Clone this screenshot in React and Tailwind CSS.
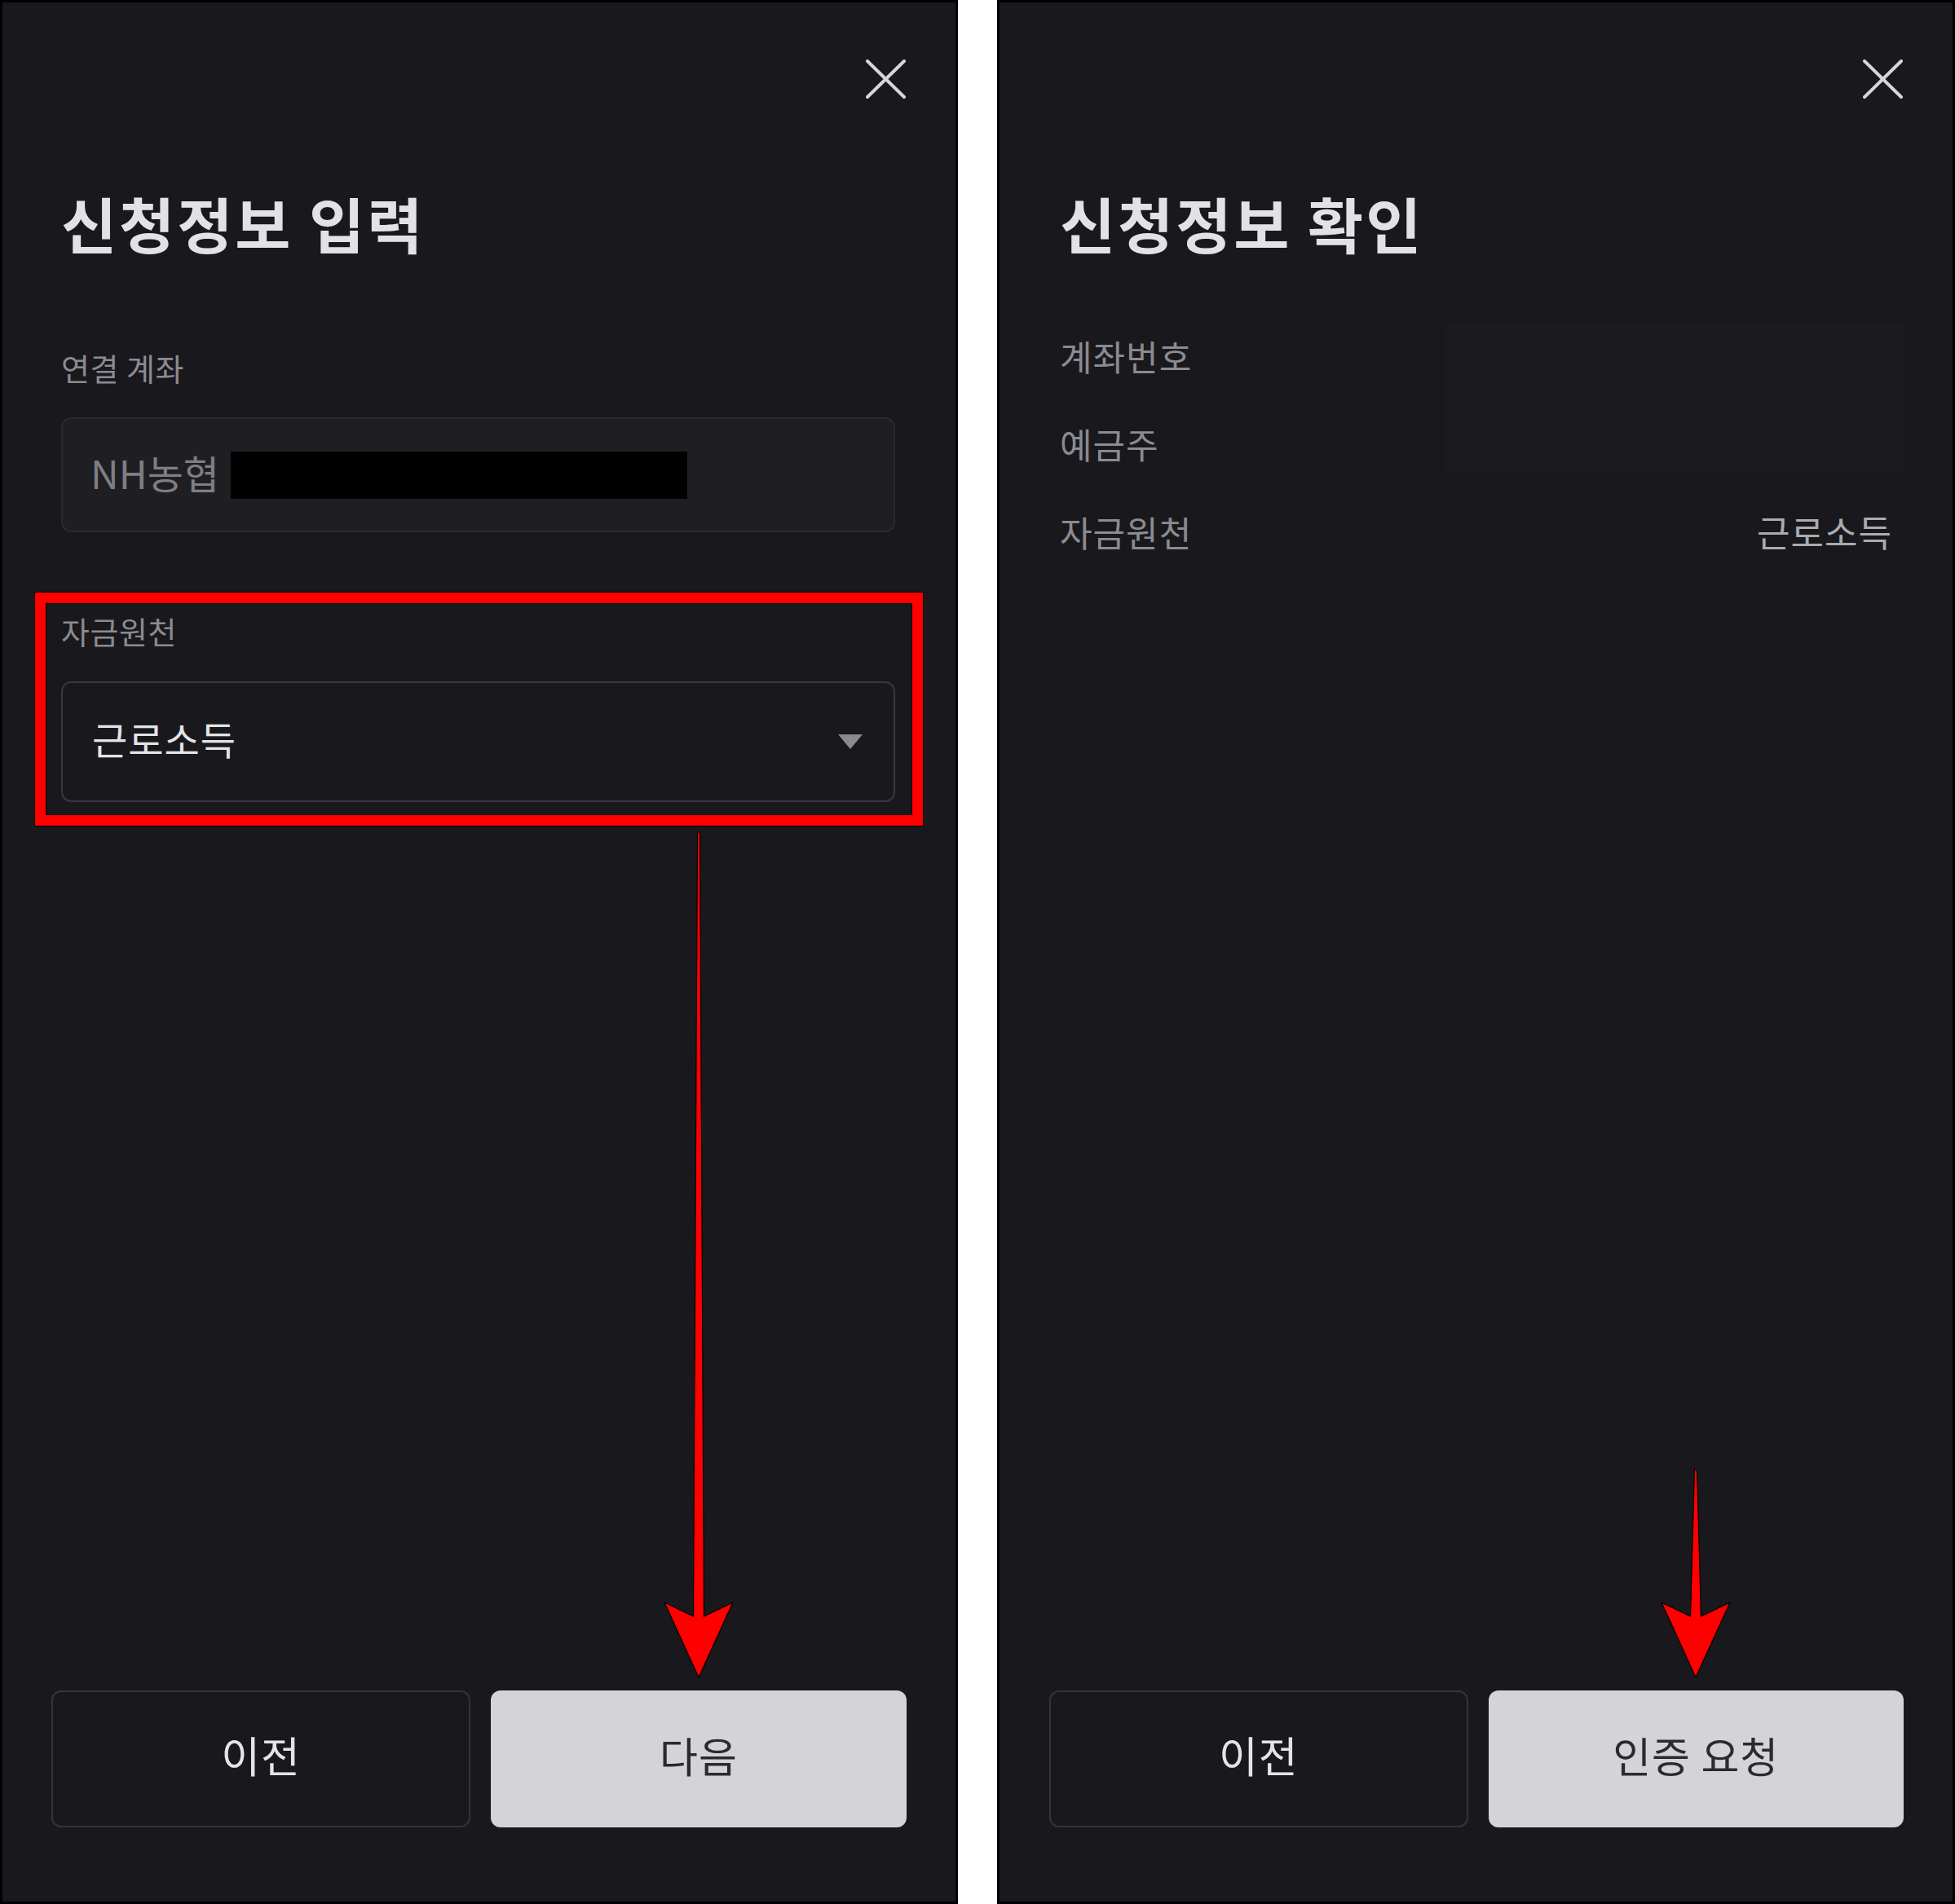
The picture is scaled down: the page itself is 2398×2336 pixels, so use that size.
function CloseIcon() {
  return (
    <svg width="50" height="50" viewBox="0 0 50 50" fill="none" aria-hidden="true">
      <path d="M2 2L47 46M47 2L2 46" stroke="#d6d6da" strokeWidth="4" strokeLinecap="round" />
    </svg>
  );
}

function CaretDown() {
  return (
    <svg width="30" height="18" viewBox="0 0 30 18" aria-hidden="true">
      <path d="M0 0H30L15 18Z" fill="#8a8a8f" />
    </svg>
  );
}

// red annotation arrow, drawn over the panel
function RedArrow({ cx, top }) {
  const pts = [
    [cx - 1.5, top],
    [cx + 1.5, top],
    [cx + 6.5, 1980],
    [cx + 42, 1963],
    [cx, 2055],
    [cx - 42, 1963],
    [cx - 6.5, 1980],
  ].map(p => p.join(',')).join(' ');
  return (
    <svg className="absolute inset-0 pointer-events-none" width="1169" height="2330" aria-hidden="true">
      <polygon points={pts} fill="#ff0000" stroke="#000" strokeWidth="1.2" strokeLinejoin="miter" />
    </svg>
  );
}

function Buttons({ right, className }) {
  return (
    <div className={`flex gap-[25px] pb-[91px] ${className}`}>
      <button className="flex-1 h-[168px] rounded-[12px] border-2 border-[#34343a] text-[52px] tracking-[1px] text-[#e4e4e7] flex items-center justify-center pb-[10px]">
        이전
      </button>
      <button className="flex-1 h-[168px] rounded-[12px] bg-[#d4d4d8] text-[51px] tracking-[1px] text-[#2a2a2f] flex items-center justify-center pb-[10px]">
        {right}
      </button>
    </div>
  );
}

function Header() {
  return (
    <div className="flex justify-end pt-[70px] pr-[60px]">
      <CloseIcon />
    </div>
  );
}

function InputPanel() {
  return (
    <div className="relative w-[1175px] h-full border-[3px] border-black bg-[#19191d] flex flex-col">
      <Header />
      <div className="pl-[72px] pr-[74px]">
        <h1 className="mt-[113px] text-[74px] leading-none font-bold tracking-[3px] text-[#e2e2e6]">신청정보 입력</h1>

        <div className="mt-[122px] text-[38px] leading-none tracking-[0.5px] text-[#8b8b91]">연결 계좌</div>
        <div className="mt-[42px] h-[141px] rounded-[12px] border-2 border-[#29292e] bg-[#1f1f23] flex items-center pl-[34px] pb-[8px]">
          <span className="text-[48px] leading-none text-[#7e7e84]">NH농협</span>
          <div className="ml-[14px] mt-[8px] w-[560px] h-[58px] bg-black" />
        </div>

        <div className="mt-[102px] text-[38px] leading-none tracking-[0.5px] text-[#8b8b91]">자금원천</div>
        <div className="mt-[43px] h-[148px] rounded-[12px] border-2 border-[#38383d] flex items-center justify-between pl-[36px] pr-[38px]">
          <span className="text-[47px] leading-none tracking-[1px] text-[#e4e4e7] pb-[9px]">근로소득</span>
          <CaretDown />
        </div>
      </div>

      <div className="flex-1" />
      <Buttons right="다음" className="px-[60px]" />

      {/* highlight box */}
      <div className="absolute left-[40px] top-[724px] w-[1089px] h-[286px] border-[13px] border-[#ff0000] shadow-[0_0_0_1px_#000,inset_0_0_0_1px_#000] pointer-events-none" />
      <RedArrow cx={854} top={1018} />
    </div>
  );
}

const ROWS = [
  { label: '계좌번호', value: '' },
  { label: '예금주', value: '' },
  { label: '자금원천', value: '근로소득' },
];

function ConfirmPanel() {
  return (
    <div className="relative w-[1175px] h-full border-[3px] border-black bg-[#19191d] flex flex-col">
      <Header />
      <div className="pl-[74px] pr-[74px]">
        <h1 className="mt-[113px] text-[74px] leading-none font-bold tracking-[3px] text-[#e2e2e6]">신청정보 확인</h1>
        <div className="mt-[72px]">
          {ROWS.map(row => (
            <div key={row.label} className="h-[108px] flex items-center justify-between">
              <span className="text-[43px] leading-none tracking-[1px] text-[#8b8b91]">{row.label}</span>
              <span className="text-[44px] leading-none tracking-[1px] text-[#ababb0]">{row.value}</span>
            </div>
          ))}
        </div>
      </div>

      {/* masked values */}
      <div className="absolute left-[547px] top-[394px] w-[562px] h-[183px] bg-[#1b1b1f] pointer-events-none" />

      <div className="flex-1" />
      <Buttons right="인증 요청" className="pl-[61px] pr-[60px]" />
      <RedArrow cx={854} top={1800} />
    </div>
  );
}

export default function App() {
  return (
    <div className="w-[2398px] h-[2336px] bg-white flex justify-between font-['Noto_Sans_CJK_KR','Noto_Sans',sans-serif]">
      <InputPanel />
      <ConfirmPanel />
    </div>
  );
}
